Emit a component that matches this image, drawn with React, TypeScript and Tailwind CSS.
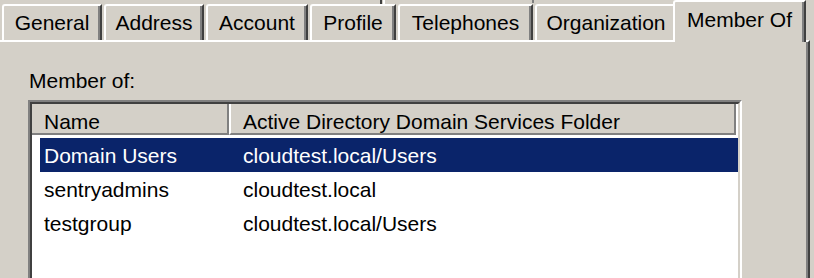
import React from "react";

const tabs = [
  { label: "General", w: 100, ml: 0 },
  { label: "Address", w: 100, ml: 2 },
  { label: "Account", w: 102, ml: 2 },
  { label: "Profile", w: 86, ml: 2 },
  { label: "Telephones", w: 135, ml: 2 },
  { label: "Organization", w: 142, ml: 2 },
];

const rows = [
  { name: "Domain Users", folder: "cloudtest.local/Users", selected: true },
  { name: "sentryadmins", folder: "cloudtest.local", selected: false },
  { name: "testgroup", folder: "cloudtest.local/Users", selected: false },
];

export default function App() {
  return (
    <div
      className="relative w-[814px] h-[278px] overflow-hidden bg-[#d4d0c8] text-black text-[21px] leading-[21px]"
      style={{ fontFamily: '"Liberation Sans", Arial, sans-serif' }}
    >
      {/* remnants of upper tab row */}
      <div className="absolute left-[380px] top-0 w-[2px] h-[4px] bg-[#404040]" />
      <div className="absolute left-[383px] top-0 w-[2px] h-[4px] bg-white" />
      <div className="absolute left-[532px] top-0 w-[2px] h-[3px] bg-[#808080]" />

      {/* tab row */}
      <div className="flex items-end h-[40px] pl-[2px]">
        {tabs.map((t) => (
          <div
            key={t.label}
            className="h-[36px] shrink-0 border-t-2 border-l-2 border-r-2 border-t-white border-l-white border-r-[#404040] rounded-tl-[3px] shadow-[inset_-2px_0_0_#808080] flex justify-center pt-[6px] whitespace-nowrap"
            style={{ width: t.w, marginLeft: t.ml }}
          >
            {t.label}
          </div>
        ))}
        <div className="relative z-10 -ml-[4px] -mb-[2px] w-[133px] h-[42px] shrink-0 bg-[#d4d0c8] border-t-2 border-l-2 border-r-2 border-t-white border-l-white border-r-[#404040] rounded-tl-[3px] shadow-[inset_-2px_0_0_#808080] flex justify-center pt-[7px] whitespace-nowrap">
          Member Of
        </div>
      </div>

      {/* panel */}
      <div className="w-[810px] h-[238px] border-t-2 border-t-white border-r-2 border-r-[#404040] shadow-[inset_-2px_0_0_#808080] pl-[29px] pt-[28px]">
        <div className="h-[21px] whitespace-nowrap">Member of:</div>

        {/* list box */}
        <div className="-ml-[1px] mt-[9px] w-[714px] h-[200px] border-t-2 border-l-2 border-t-[#808080] border-l-[#808080] border-r-2 border-r-white">
          <div className="h-full border-t-2 border-l-2 border-t-[#404040] border-l-[#404040] border-r-2 border-r-[#d4d0c8] bg-white">
            {/* header */}
            <div className="flex h-[31px]">
              <div className="w-[197px] h-full bg-[#d4d0c8] border-b-2 border-r-2 border-[#808080] pl-[12px] pt-[7px] whitespace-nowrap">
                Name
              </div>
              <div className="w-[507px] h-full bg-[#d4d0c8] border-l-2 border-l-white border-b-2 border-b-[#808080] border-r-2 border-r-[#808080] pl-[12px] pt-[7px] whitespace-nowrap">
                Active Directory Domain Services Folder
              </div>
            </div>

            {/* rows */}
            <div className="pt-[3px] pl-[8px]">
              {rows.map((r) => (
                <div
                  key={r.name}
                  className={
                    "flex h-[34px] pt-[7px] pl-[4px] whitespace-nowrap " +
                    (r.selected ? "bg-[#0a246a] text-white" : "")
                  }
                >
                  <div className="w-[199px]">{r.name}</div>
                  <div>{r.folder}</div>
                </div>
              ))}
            </div>
          </div>
        </div>
      </div>
    </div>
  );
}
